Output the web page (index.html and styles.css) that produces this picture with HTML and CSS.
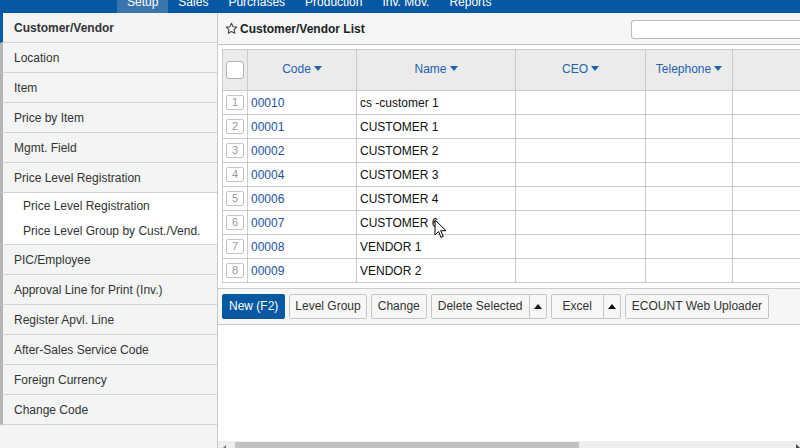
FILE: index.html
```html
<!DOCTYPE html>
<html>
<head>
<meta charset="utf-8">
<link rel="stylesheet" href="styles.css">
</head>
<body>
<div class="nav">
  <span class="nav-item active">Setup</span>
  <span class="nav-item">Sales</span>
  <span class="nav-item">Purchases</span>
  <span class="nav-item">Production</span>
  <span class="nav-item">Inv. Mov.</span>
  <span class="nav-item">Reports</span>
</div>
<div class="layout">
  <div class="sidebar">
    <div class="side-item selected">Customer/Vendor</div>
    <div class="side-item">Location</div>
    <div class="side-item">Item</div>
    <div class="side-item">Price by Item</div>
    <div class="side-item">Mgmt. Field</div>
    <div class="side-item">Price Level Registration</div>
    <div class="side-sub">
      <div class="sub-item">Price Level Registration</div>
      <div class="sub-item">Price Level Group by Cust./Vend.</div>
    </div>
    <div class="side-item">PIC/Employee</div>
    <div class="side-item">Approval Line for Print (Inv.)</div>
    <div class="side-item">Register Apvl. Line</div>
    <div class="side-item">After-Sales Service Code</div>
    <div class="side-item">Foreign Currency</div>
    <div class="side-item">Change Code</div>
  </div>
  <div class="main">
    <div class="main-header">
      <svg class="star" width="13" height="13" viewBox="0 0 24 24"><path d="M12 2.5l2.9 6.2 6.8.8-5 4.7 1.3 6.7L12 17.6 6 20.9l1.3-6.7-5-4.7 6.8-.8z" fill="none" stroke="#444" stroke-width="2" stroke-linejoin="round"/></svg>
      <span class="title">Customer/Vendor List</span>
      <span class="search"></span>
    </div>
    <div class="table-wrap">
      <table class="grid">
        <colgroup>
          <col class="c-chk"><col class="c-code"><col class="c-name"><col class="c-ceo"><col class="c-tel"><col class="c-more">
        </colgroup>
        <thead>
          <tr>
            <th><span class="chk"></span></th>
            <th>Code<span class="caret"></span></th>
            <th>Name<span class="caret"></span></th>
            <th>CEO<span class="caret"></span></th>
            <th>Telephone<span class="caret"></span></th>
            <th></th>
          </tr>
        </thead>
        <tbody>
          <tr><td><span class="num">1</span></td><td class="code">00010</td><td>cs -customer 1</td><td></td><td></td><td></td></tr>
          <tr><td><span class="num">2</span></td><td class="code">00001</td><td>CUSTOMER 1</td><td></td><td></td><td></td></tr>
          <tr><td><span class="num">3</span></td><td class="code">00002</td><td>CUSTOMER 2</td><td></td><td></td><td></td></tr>
          <tr><td><span class="num">4</span></td><td class="code">00004</td><td>CUSTOMER 3</td><td></td><td></td><td></td></tr>
          <tr><td><span class="num">5</span></td><td class="code">00006</td><td>CUSTOMER 4</td><td></td><td></td><td></td></tr>
          <tr><td><span class="num">6</span></td><td class="code">00007</td><td>CUSTOMER 6</td><td></td><td></td><td></td></tr>
          <tr><td><span class="num">7</span></td><td class="code">00008</td><td>VENDOR 1</td><td></td><td></td><td></td></tr>
          <tr><td><span class="num">8</span></td><td class="code">00009</td><td>VENDOR 2</td><td></td><td></td><td></td></tr>
        </tbody>
      </table>
    </div>
    <div class="toolbar">
      <span class="btn primary">New (F2)</span>
      <span class="btn tight">Level Group</span>
      <span class="btn">Change</span>
      <span class="split"><span class="btn left">Delete Selected</span><span class="btn arrow"><span class="up"></span></span></span>
      <span class="split"><span class="btn left wide">Excel</span><span class="btn arrow"><span class="up"></span></span></span>
      <span class="btn">ECOUNT Web Uploader</span>
    </div>
    <div class="spacer"></div>
    <div class="hscroll">
      <span class="sc-left"></span>
      <span class="thumb"></span>
      <span class="sc-right"></span>
    </div>
  </div>
</div>
<svg class="cursor" width="14" height="20" viewBox="0 0 14 20"><path d="M1 1v15l3.5-3.5 2.5 6 2.2-1-2.5-5.8H12z" fill="#fff" stroke="#000" stroke-width="1" stroke-linejoin="miter"/></svg>
</body>
</html>
```
FILE: styles.css
```css
* { box-sizing: border-box; }
html, body {
  margin: 0;
  padding: 0;
  width: 800px;
  height: 448px;
  overflow: hidden;
  font-family: "Liberation Sans", Arial, sans-serif;
  font-size: 12px;
  color: #222;
  background: #fff;
}
.nav {
  height: 13px;
  background: #0658a3;
  display: flex;
  padding-left: 117px;
  overflow: hidden;
}
.nav-item {
  height: 13px;
  padding: 0 10px;
  line-height: 5px;
  color: #fff;
  white-space: nowrap;
}
.nav-item.active { background: #3a75b0; }

.layout {
  display: flex;
  height: 435px;
}
.sidebar {
  width: 218px;
  flex: 0 0 218px;
  background: #f3f4f4;
  border-right: 1px solid #c9c9c9;
}
.side-item {
  height: 30px;
  line-height: 30px;
  border-left: 3px solid #b4b4b4;
  border-bottom: 1px solid #d2d2d2;
  padding-left: 11px;
  color: #333;
  white-space: nowrap;
  overflow: hidden;
}
.side-item.selected {
  border-left-color: #0658a3;
  font-weight: bold;
  color: #333;
}
.side-sub {
  background: #fff;
  border-left: 3px solid #b4b4b4;
  border-bottom: 1px solid #d2d2d2;
  padding-bottom: 1px;
}
.sub-item {
  height: 25px;
  line-height: 26px;
  padding-left: 20px;
  color: #333;
  white-space: nowrap;
}

.main {
  flex: 1;
  display: flex;
  flex-direction: column;
  overflow: hidden;
  background: #fff;
}
.main-header {
  height: 32px;
  flex: 0 0 32px;
  background: #f5f6f6;
  border-bottom: 1px solid #c2c2c2;
  display: flex;
  align-items: center;
  padding-left: 7px;
}
.star { flex: 0 0 auto; margin-right: 2px; margin-top: -1px; }
.title { font-weight: bold; color: #222; flex: 1; }
.search {
  width: 169px;
  height: 19px;
  background: #fff;
  border: 1px solid #bcbcbc;
  border-right: none;
  border-radius: 3px 0 0 3px;
  margin-top: 2px;
}

.table-wrap {
  padding: 4px 0 0 4px;
}
.grid {
  border-collapse: collapse;
  table-layout: fixed;
  width: 630px;
}
.c-chk { width: 25px; }
.c-code { width: 109px; }
.c-name { width: 159px; }
.c-ceo { width: 130px; }
.c-tel { width: 87px; }
.c-more { width: 120px; }
.grid th, .grid td {
  border: 1px solid #cbcbc6;
  padding: 0;
  white-space: nowrap;
  overflow: hidden;
}
.grid thead tr { height: 41px; }
.grid th {
  background: #ebebeb;
  color: #1b63ae;
  font-weight: normal;
  text-align: center;
  padding-bottom: 2px;
}
.grid th:first-child { text-align: left; padding-bottom: 0; }
.chk {
  display: block;
  width: 18px;
  height: 18px;
  margin-left: 3px;
  background: #fff;
  border: 1px solid #b3b3b3;
  border-radius: 3px;
}
.caret {
  display: inline-block;
  width: 0;
  height: 0;
  margin-left: 3px;
  vertical-align: middle;
  margin-top: -2px;
  border-left: 4px solid transparent;
  border-right: 4px solid transparent;
  border-top: 5px solid #1b63ae;
}
.grid tbody tr { height: 24px; }
.grid td { padding-left: 3px; color: #111; }
.grid td:first-child { padding-left: 3px; }
.num {
  display: block;
  width: 18px;
  height: 15px;
  border: 1px solid #c3c3c3;
  border-radius: 2px;
  background: #fff;
  color: #9a9a9a;
  font-size: 11px;
  line-height: 13px;
  text-align: center;
}
.grid td.code { color: #1d519d; }

.toolbar {
  margin-top: 5px;
  background: #f6f6f6;
  border-top: 1px solid #cccccc;
  border-bottom: 1px solid #cccccc;
  padding: 5px 4px;
  display: flex;
  gap: 4px;
}
.btn {
  height: 25px;
  line-height: 23px;
  padding: 0 6px;
  border: 1px solid #c6c6c6;
  border-radius: 2px;
  background: #f7f7f7;
  color: #333;
  white-space: nowrap;
}
.btn.tight { padding: 0 5px; }
.btn.primary {
  background: #0658a3;
  border-color: #0658a3;
  color: #fff;
  padding: 0 6px;
}
.split { display: flex; }
.btn.left { border-radius: 2px 0 0 2px; }
.btn.left.wide { padding: 0 11px; }
.btn.arrow {
  width: 18px;
  padding: 0;
  border-left: none;
  border-radius: 0 2px 2px 0;
  display: flex;
  align-items: center;
  justify-content: center;
}
.btn.left + .btn.arrow { border-left: 1px solid #c6c6c6; margin-left: -1px; }
.up {
  width: 0;
  height: 0;
  border-left: 4px solid transparent;
  border-right: 4px solid transparent;
  border-bottom: 5px solid #111;
}
.spacer { flex: 1; }
.hscroll {
  height: 8px;
  flex: 0 0 8px;
  background: #eeeeee;
  display: flex;
  align-items: flex-start;
  margin-bottom: -1px;
}
.sc-left {
  width: 0;
  height: 0;
  margin: 4px 6px 0 4px;
  border-left: 4px solid transparent;
  border-bottom: 4px solid #777;
}
.thumb {
  width: 344px;
  height: 8px;
  margin-left: 3px;
  margin-top: 1px;
  background: #c1c1c1;
}
.sc-right {
  margin-left: auto;
  width: 0;
  height: 0;
  margin-top: 3px;
  border-left: 4px solid #444;
  border-top: 4px solid transparent;
  border-bottom: 4px solid transparent;
}
.cursor {
  position: absolute;
  left: 434px;
  top: 219px;
}
```
